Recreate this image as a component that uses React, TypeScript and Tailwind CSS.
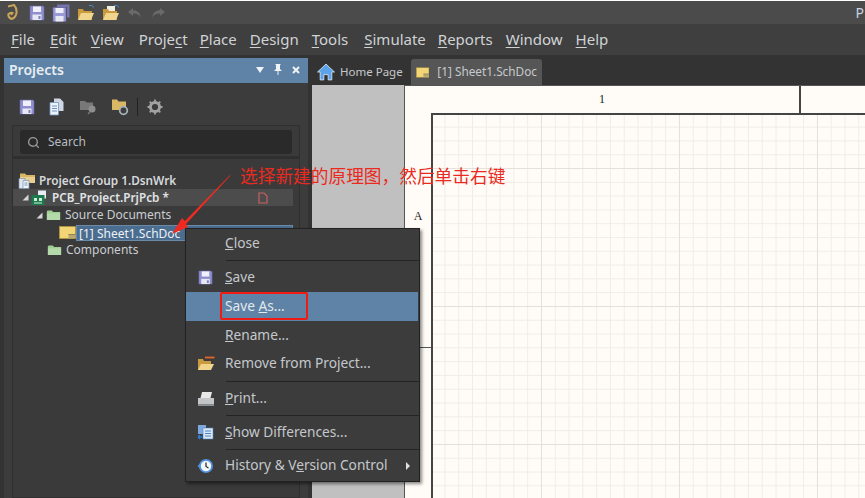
import React from 'react';
import { Search } from 'lucide-react';

const Floppy = ({ size = 17 }: { size?: number }) => (
  <svg width={size} height={size} viewBox="0 0 16 16">
    <path d="M1 1h13l1 1v13H1z" fill="#8f8fd0" stroke="#6a6aa8" strokeWidth="0.6" />
    <rect x="4" y="1.5" width="8" height="5.5" fill="#f0f0fa" />
    <rect x="3.5" y="9.5" width="9" height="5.5" fill="#e8e8f2" />
    <rect x="9.5" y="11" width="2" height="3" fill="#8080b8" />
  </svg>
);

const DoubleFloppy = () => (
  <svg width="18" height="18" viewBox="0 0 18 18">
    <path d="M5 0.500h12.500v13H15V3H5z" fill="#7474b0" />
    <path d="M1 3.500h13v14H1z" fill="#9a9ad6" stroke="#6a6aa8" strokeWidth="0.6" />
    <rect x="3.500" y="4" width="8" height="5" fill="#f0f0fa" />
    <rect x="3.500" y="12" width="8" height="5.500" fill="#e8e8f2" />
  </svg>
);

const Folder = ({ fill = '#e3bd68', w = 18, h = 14 }: { fill?: string; w?: number; h?: number }) => (
  <svg width={w} height={h} viewBox="0 0 18 14">
    <path d="M1 13V2.500L2 1.500h5l1.500 2H17v9.500z" fill={fill} />
    <path d="M1 5h16v8H1z" fill="#ffffff" opacity="0.22" />
  </svg>
);

const GroupIcon = () => (
  <svg width="18" height="17" viewBox="0 0 18 17">
    <path d="M2 10V1.500h5l1.500 1.500H17v8z" fill="#d9b764" />
    <path d="M2 5h15v6H2z" fill="#ead08e" />
    <path d="M1 6.500h6v10H1z" fill="#dfe6f0" stroke="#7a90ac" strokeWidth="0.7" />
    <path d="M5 8.500h6v8H5z" fill="#eef2f8" stroke="#7a90ac" strokeWidth="0.7" />
    <path d="M6.500 11h3M6.500 13h3" stroke="#6f94c4" />
  </svg>
);

const OpenFolder = ({ paper = false }: { paper?: boolean }) => (
  <svg width="18" height="18" viewBox="0 0 18 18">
    <path d="M12 1.500q3 -1 5 2" fill="none" stroke="#4f8fc8" strokeWidth="1" />
    {paper && <path d="M5 2h8v7H5z" fill="#f3efe0" />}
    <path d="M1 16V5h5l1 2h8v9z" fill="#c99a3e" />
    <path d="M1 16l3 -7h13l-3 7z" fill="#f2d58c" />
  </svg>
);

const SchDoc = () => (
  <svg width="17" height="13" viewBox="0 0 17 13">
    <rect x="0.500" y="0.500" width="16" height="12" fill="#f2d675" stroke="#b89a3c" strokeWidth="0.6" />
    <rect x="9.500" y="8" width="7" height="4.500" fill="#b7a773" />
    <rect x="9.500" y="8" width="7" height="1" fill="#8f8358" />
  </svg>
);

const HomeIcon = () => (
  <svg width="18" height="18" viewBox="0 0 17 17">
    <path d="M8.500 1L0.500 8.500h2.500V16h3.500v-5h4v5H14V8.500h2.500z" fill="#5da3ea" stroke="#e8f2fb" strokeWidth="0.7" />
  </svg>
);

const DarkFolderSearch = () => (
  <svg width="18" height="16" viewBox="0 0 18 16">
    <path d="M1 11V2h5l1.500 1.500H14V11z" fill="#787878" />
    <circle cx="13" cy="10" r="3.500" fill="#8e8e8e" />
    <path d="M9 15l2 -2" stroke="#787878" strokeWidth="1.500" />
  </svg>
);

const FolderGear = () => (
  <svg width="18" height="18" viewBox="0 0 18 18">
    <path d="M1 12V1.500h5l1.500 2H15V12z" fill="#d9b764" />
    <circle cx="12.500" cy="12.500" r="3.800" fill="#3d3d3d" stroke="#a8b2b8" strokeWidth="1.800" />
  </svg>
);

const Gear = () => (
  <svg width="16" height="16" viewBox="0 0 16 16">
    <circle cx="8" cy="8" r="4.600" fill="none" stroke="#a2a2a2" strokeWidth="3" />
    <path d="M8 0.500v2.500M8 13v2.500M0.500 8H3M13 8h2.500M2.700 2.700l1.800 1.800M11.500 11.500l1.800 1.800M13.300 2.700l-1.800 1.800M4.500 11.500l-1.800 1.800" stroke="#a2a2a2" strokeWidth="1.800" />
  </svg>
);

const Docs = () => (
  <svg width="16" height="18" viewBox="0 0 16 18">
    <path d="M5 0.500h6l3.500 3.500v9H5z" fill="#cfd6e4" />
    <path d="M1 4.500h8.500V17H1z" fill="#eef2fa" stroke="#6f94c4" strokeWidth="0.8" />
    <path d="M3 8h5M3 10.500h5M3 13h5" stroke="#6f94c4" />
  </svg>
);

const PcbIcon = () => (
  <svg width="20" height="16" viewBox="0 0 20 16">
    <path d="M7 0.500h8v8H7z" fill="#e8edf5" />
    <rect x="0.500" y="5" width="13" height="10" fill="#1c7a4c" />
    <path d="M3 8h3v3H3zM8 8h3v3H8z" fill="#d0f0df" />
    <path d="M3 13h8" stroke="#d0f0df" />
  </svg>
);

const Expander = () => (
  <svg width="7" height="7" viewBox="0 0 7 7">
    <path d="M6.500 0.500v6h-6z" fill="#d6d6d6" />
  </svg>
);

const GreenFolder = () => <Folder fill="#9fcf94" w={15} h={12} />;

const PrintIcon = () => (
  <svg width="18" height="16" viewBox="0 0 18 16">
    <path d="M5 1h10l-1.500 6H3.500z" fill="#e8e8e8" />
    <path d="M1 7h16v6.500H1z" fill="#c3c5c9" />
    <path d="M1 13.500h16v1.500H1z" fill="#8f9297" />
  </svg>
);

const DiffIcon = () => (
  <svg width="17" height="16" viewBox="0 0 17 16">
    <path d="M1 1h8v9H1z" fill="#7da8dc" />
    <path d="M6 4h10v11H6z" fill="#dbe7f6" stroke="#4d86c8" strokeWidth="0.6" />
    <path d="M8 7h6M8 9.500h6M8 12h6" stroke="#4d86c8" />
    <path d="M1 13h4M1 13l2 -2M1 13l2 2" stroke="#2d7fe0" strokeWidth="1.300" fill="none" />
  </svg>
);

const ClockIcon = () => (
  <svg width="17" height="16" viewBox="0 0 17 16">
    <circle cx="9" cy="8" r="7" fill="#4f93dc" />
    <circle cx="9" cy="8" r="5.200" fill="#f3f6fa" />
    <path d="M9 4.500V8.500l2.500 1.500" stroke="#333" strokeWidth="1.300" fill="none" />
    <path d="M0.500 8l2.500 -2.500v5z" fill="#4f93dc" />
  </svg>
);

const RemoveIcon = () => (
  <svg width="18" height="16" viewBox="0 0 18 16">
    <path d="M8 1.500h9.500" stroke="#e4662a" strokeWidth="1.800" />
    <path d="M1 14V3h5l1 2h7v9z" fill="#c99a3e" />
    <path d="M1 14l3 -6h13l-3 6z" fill="#f2d58c" />
  </svg>
);

const menus: [string, string, string, string][] = [
  ['', 'F', 'ile', 'mr-[15px]'],
  ['', 'E', 'dit', 'mr-[14px]'],
  ['', 'V', 'iew', 'mr-[15px]'],
  ['Proje', 'c', 't', 'mr-[12px]'],
  ['', 'P', 'lace', 'mr-[13px]'],
  ['', 'D', 'esign', 'mr-[13px]'],
  ['', 'T', 'ools', 'mr-[16px]'],
  ['', 'S', 'imulate', 'mr-[12px]'],
  ['', 'R', 'eports', 'mr-[13px]'],
  ['', 'W', 'indow', 'mr-[13px]'],
  ['', 'H', 'elp', 'mr-[13px]'],
];

const MenuRow = ({
  icon,
  h,
  active,
  children,
  arrow,
}: {
  icon?: React.ReactNode;
  h: string;
  active?: boolean;
  children: React.ReactNode;
  arrow?: boolean;
}) => (
  <div className={`flex items-center ${h} ${active ? 'mr-px bg-[#5e83a6] text-[#e4e8ec]' : ''}`}>
    <div className="w-[39px] flex justify-center shrink-0">{icon}</div>
    <div className="flex-1">{children}</div>
    {arrow && <div className="w-0 h-0 mr-[9px] border-y-[4px] border-y-transparent border-l-[4px] border-l-[#e0e0e0]" />}
  </div>
);

const Separator = () => <div className="ml-[40px] h-px bg-[#242424]" />;

const App: React.FC = () => {
  return (
    <div className="relative w-[865px] h-[498px] overflow-hidden bg-[#3b3b3b] text-[#c9cdd1] text-[14px] font-['Noto_Sans','Open_Sans',sans-serif]">
      <div className="h-px bg-white" />
      <div className="flex items-center justify-between h-[23px] pl-[6px] bg-[#4b4b4b]">
        <div className="flex items-center gap-[7px]">
          <svg width="12" height="17" viewBox="0 0 12 17" className="mr-[4px]">
            <path d="M2 2.500l6 -1.500q3 3 2.500 8q-1 5 -5 6q-4 -2 -3 -5q2 -2 4 -1l-1.500 2" fill="none" stroke="#c8a35c" strokeWidth="2" />
          </svg>
          <Floppy size={16} />
          <DoubleFloppy />
          <OpenFolder />
          <OpenFolder paper />
          <svg width="16" height="12" viewBox="0 0 16 12">
            <path d="M6 1L1 5l5 4V6.500q5 -.5 8 4q-1 -7 -8 -7.500z" fill="#6a6a6a" />
          </svg>
          <svg width="16" height="12" viewBox="0 0 16 12">
            <path d="M10 1l5 4l-5 4V6.500q-5 -.5 -8 4q1 -7 8 -7.500z" fill="#6a6a6a" />
          </svg>
        </div>
        <span className="mr-px text-[#c5d4e4] text-[14px]">P</span>
      </div>

      <div className="flex items-center h-[31px] pl-[11px] bg-[#3f3f3f] text-[15px] text-[#d0d3d6]">
        {menus.map(([pre, key, post, gap], i) => (
          <span key={i} className={`${gap} leading-none`}>
            {pre}
            <u className="underline-offset-2">{key}</u>
            {post}
          </span>
        ))}
      </div>

      <div className="flex h-[443px]">
        <div className="w-[312px] bg-[#333333] pt-[3px] pl-[4px] pr-[4px] shrink-0">
          <div className="h-full bg-[#3c3c3c]">
            <div className="flex items-center justify-between h-[25px] pb-[2px] px-[5px] bg-[#5e83a6] text-[#e8edf2] font-semibold text-[14px]">
              <span>Projects</span>
              <div className="flex items-center gap-[10px] pr-[3px]">
                <svg width="8" height="6" viewBox="0 0 8 6">
                  <path d="M0 0h8L4 6z" fill="#f0f3f6" />
                </svg>
                <svg width="8" height="11" viewBox="0 0 8 11">
                  <path d="M1.500 0h5v1H6v4l2 2H4.500v4h-1V7H0l2 -2V1h-.5z" fill="#f0f3f6" />
                </svg>
                <svg width="8" height="8" viewBox="0 0 8 8">
                  <path d="M1 1l6 6M7 1L1 7" stroke="#f0f3f6" strokeWidth="2" />
                </svg>
              </div>
            </div>
            <div className="flex items-center h-[42px] pt-[5px] pl-[15px] gap-[14px]">
              <Floppy size={16} />
              <Docs />
              <DarkFolderSearch />
              <FolderGear />
              <div className="w-px h-[18px] bg-[#222] -ml-[6px]" />
              <div className="-ml-[5px]"><Gear /></div>
            </div>
            <div className="mx-[8px] h-[373px] border border-[#2f2f2f] bg-[#3a3a3a]">
              <div className="flex items-center gap-[8px] mx-[7px] mt-[4px] h-[24px] px-[7px] rounded-[3px] bg-[#2a2a2a] text-[12px] text-[#b8bcc0]">
                <Search size={13} strokeWidth={2.5} className="text-[#9a9a9a]" />
                <span>Search</span>
              </div>
              <div className="h-[3px] mt-[2px] bg-[#2f2f2f]" />
              <div className="pt-[13px] text-[12px]">
                <div className="flex items-center h-[17px] pl-[5px] gap-[3px] font-semibold text-[#d5d8db]">
                  <GroupIcon />
                  <span className="text-[11.8px]">Project Group 1.DsnWrk</span>
                </div>
                <div className="flex items-center h-[17px] pl-[9px] mr-[6px] gap-[2px] bg-[#4c4c4c] font-semibold text-[#e0e3e6]">
                  <Expander />
                  <PcbIcon />
                  <span className="flex-1 -ml-px text-[11.8px]">PCB_Project.PrjPcb *</span>
                  <svg width="10" height="12" viewBox="0 0 10 12" className="mr-[25px]">
                    <path d="M1 1h5l3 3v7H1z" fill="none" stroke="#c86060" strokeWidth="1.200" />
                  </svg>
                </div>
                <div className="flex items-center h-[18px] pl-[23px] gap-[3px]">
                  <Expander />
                  <GreenFolder />
                  <span className="ml-[1px]">Source Documents</span>
                </div>
                <div className="flex items-center h-[17px] pl-[46px]">
                  <SchDoc />
                  <span className="flex-1 mr-[6px] h-[16px] leading-[15px] pl-[2px] bg-[#4a6d90] border border-[#6a8aa8] text-[#eef1f4]">[1] Sheet1.SchDoc</span>
                </div>
                <div className="flex items-center h-[18px] pl-[34px] gap-[4px]">
                  <GreenFolder />
                  <span>Components</span>
                </div>
              </div>
            </div>
          </div>
        </div>

        <div className="flex-1 min-w-0">
          <div className="flex items-end h-[30px] pl-[5px] gap-[5px] bg-[#333333] text-[12px] text-[#c6c9cc]">
            <div className="flex items-center gap-[5px] h-[26px] w-[89px]">
              <HomeIcon />
              <span className="text-[11.5px]">Home Page</span>
            </div>
            <div className="flex items-center gap-[8px] h-[26px] px-[5px] w-[131px] rounded-t-[3px] bg-[#565656]">
              <SchDoc />
              <span className="whitespace-nowrap text-[11.8px]">[1] Sheet1.SchDoc</span>
            </div>
          </div>

          <div className="flex h-[413px] bg-[#c0c0c0]">
            <div className="w-[92px] shrink-0" />
            <div className="flex-1 flex flex-col bg-[#fffcf7] border-l border-t border-[#555] font-['Liberation_Serif',serif] text-[12px] text-[#222]">
              <div className="flex h-[27px] shrink-0">
                <div className="w-[396px] border-r-2 border-[#444] text-center leading-[27px]">1</div>
              </div>
              <div className="flex flex-1">
                <div className="w-[26px] shrink-0">
                  <div className="flex items-center justify-center h-[235px] pb-[28px] border-b border-[#555]">A</div>
                </div>
                <div className="flex-1 border-l-2 border-t-2 border-[#444] bg-[#fffcf7] bg-[linear-gradient(to_right,#e3e1da_1px,transparent_1px),linear-gradient(to_bottom,#e3e1da_1px,transparent_1px),linear-gradient(to_right,#efede7_1px,transparent_1px),linear-gradient(to_bottom,#efede7_1px,transparent_1px)] bg-[size:138px_138px,138px_138px,13.8px_13.8px,13.8px_13.8px] bg-[position:-30px_-85px,-30px_-85px,11.400px_11.600px,11.400px_11.600px]" />
              </div>
            </div>
          </div>
        </div>
      </div>

      <div className="absolute left-[185px] top-[228px] w-[235px] h-[254px] bg-[#3c3c3c] border border-[#222] shadow-[2px_2px_3px_rgba(0,0,0,0.45)] text-[13.7px] text-[#c4c8cc]">
        <MenuRow h="h-[31px] pb-[2px]"><u>C</u>lose</MenuRow>
        <Separator />
        <MenuRow h="h-[31px] pt-[1px]" icon={<Floppy size={15} />}><u>S</u>ave</MenuRow>
        <MenuRow h="h-[29px]" active>Save <u>A</u>s...</MenuRow>
        <MenuRow h="h-[28px]"><u>R</u>ename...</MenuRow>
        <MenuRow h="h-[32px] pb-[3px]" icon={<RemoveIcon />}>Remove from Project...</MenuRow>
        <Separator />
        <MenuRow h="h-[33px]" icon={<PrintIcon />}><u>P</u>rint...</MenuRow>
        <Separator />
        <MenuRow h="h-[33px] pb-[1px]" icon={<DiffIcon />}><u>S</u>how Differences...</MenuRow>
        <Separator />
        <MenuRow h="h-[32px] pb-[1px]" icon={<ClockIcon />} arrow>History &amp; V<u>e</u>rsion Control</MenuRow>
      </div>

      <div className="absolute left-[220px] top-[292px] w-[88px] h-[28px] rounded-[2px] border-2 border-[#f01c14]" />

      <span className="absolute left-[240px] top-[163px] text-[17.7px] leading-[24px] whitespace-nowrap text-[#ea2a20] font-['Noto_Sans_CJK_SC',sans-serif]">选择新建的原理图，然后单击右键</span>

      <svg className="absolute left-[165px] top-[172px]" width="70" height="72" viewBox="0 0 70 72">
        <path d="M65 3L20 49l-3 -3L7 62l16 -7l-2 -3L65 4z" fill="#f02a20" />
      </svg>
    </div>
  );
};

export default App;
